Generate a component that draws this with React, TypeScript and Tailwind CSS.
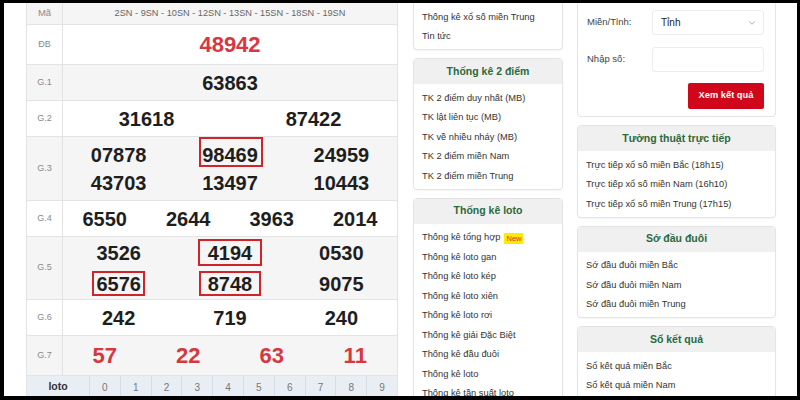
import { ChevronDown } from "lucide-react";

type Cell = string | { n: string; box: string };

function Num({ c }: { c: Cell }) {
  if (typeof c === "string") return <span>{c}</span>;
  return (
    <span className="relative">
      {c.n}
      <span className={`absolute border-2 border-[#d0242b] ${c.box}`} />
    </span>
  );
}

function Row({
  label,
  h,
  gray,
  children,
}: {
  label: string;
  h: string;
  gray?: boolean;
  children: React.ReactNode;
}) {
  return (
    <div className={`flex border-b border-[#e3e3e3] ${h} ${gray ? "bg-[#f5f5f5]" : "bg-white"}`}>
      <div className="w-[36px] shrink-0 border-r border-[#e3e3e3] flex items-center justify-center text-[9px] text-[#8a8a8a]">
        {label}
      </div>
      <div className="flex-1 flex flex-col justify-center">{children}</div>
    </div>
  );
}

function Line({ cells, cols, h, red }: { cells: Cell[]; cols: string; h: string; red?: boolean }) {
  return (
    <div
      className={`grid ${cols} ${h} items-center text-center font-bold leading-none ${
        red ? "text-[22px] text-[#d7373f]" : "text-[20px] text-[#1e1e1e]"
      }`}
    >
      {cells.map((c, i) => (
        <div key={i}>
          <Num c={c} />
        </div>
      ))}
    </div>
  );
}

function Card({
  title,
  items,
  className = "",
  top = "pt-[5px]",
}: {
  title?: string;
  items: React.ReactNode[];
  className?: string;
  top?: string;
}) {
  return (
    <div
      className={`border border-[#e4e4e4] rounded-[4px] bg-white overflow-hidden shadow-[0_1px_2px_rgba(0,0,0,0.04)] ${className}`}
    >
      {title && (
        <div className="h-[25px] bg-[#f0f0f0] flex items-center justify-center text-[10.5px] font-bold text-[#2a6a3e]">
          {title}
        </div>
      )}
      <div className={`px-[8px] pb-[2px] ${top}`}>
        {items.map((it, i) => (
          <div key={i} className="h-[19.5px] flex items-center text-[9.3px] text-[#333] whitespace-nowrap">
            {it}
          </div>
        ))}
      </div>
    </div>
  );
}

export default function App() {
  return (
    <div className="w-[800px] h-[400px] bg-black pt-[3px] pb-[4px] pl-[4px] pr-[3px] font-['Liberation_Sans',Arial,sans-serif]">
      <div className="h-full bg-white overflow-hidden flex items-start pl-[22px]">
        {/* results table */}
        <div className="w-[372px] shrink-0 border-l border-r border-[#e3e3e3]">
          <div className="flex h-[22px] border-b border-[#e3e3e3] bg-[#f5f5f5]">
            <div className="w-[36px] shrink-0 border-r border-[#e3e3e3] flex items-center justify-center text-[9.5px] text-[#8a8a8a]">
              Mã
            </div>
            <div className="flex-1 flex items-center justify-center text-[9.2px] text-[#666]">
              2SN - 9SN - 10SN - 12SN - 13SN - 15SN - 18SN - 19SN
            </div>
          </div>
          <Row label="ĐB" h="h-[40px]">
            <Line cells={["48942"]} cols="grid-cols-1" h="h-[30px]" red />
          </Row>
          <Row label="G.1" h="h-[36px]" gray>
            <Line cells={["63863"]} cols="grid-cols-1" h="h-[28px]" />
          </Row>
          <Row label="G.2" h="h-[36px]">
            <Line cells={["31618", "87422"]} cols="grid-cols-2" h="h-[28px]" />
          </Row>
          <Row label="G.3" h="h-[64px]" gray>
            <Line
              cells={["07878", { n: "98469", box: "left-[-3px] right-[-5px] top-[-7px] bottom-[-1px]" }, "24959"]}
              cols="grid-cols-3"
              h="h-[28px]"
            />
            <Line cells={["43703", "13497", "10443"]} cols="grid-cols-3" h="h-[28px]" />
          </Row>
          <Row label="G.4" h="h-[36px]">
            <Line cells={["6550", "2644", "3963", "2014"]} cols="grid-cols-4" h="h-[28px]" />
          </Row>
          <Row label="G.5" h="h-[63px]" gray>
            <Line
              cells={["3526", { n: "4194", box: "left-[-10px] right-[-10px] top-[-3px] bottom-[-2px]" }, "0530"]}
              cols="grid-cols-3"
              h="h-[31px]"
            />
            <Line
              cells={[
                { n: "6576", box: "left-[-4px] right-[-4px] top-[-2px] bottom-[-1px]" },
                { n: "8748", box: "left-[-9px] right-[-9px] top-[-2px] bottom-[-1px]" },
                "9075",
              ]}
              cols="grid-cols-3"
              h="h-[31px]"
            />
          </Row>
          <Row label="G.6" h="h-[36px]">
            <Line cells={["242", "719", "240"]} cols="grid-cols-3" h="h-[28px]" />
          </Row>
          <Row label="G.7" h="h-[40px]" gray>
            <Line cells={["57", "22", "63", "11"]} cols="grid-cols-4" h="h-[30px]" red />
          </Row>
          <div className="flex h-[22px] bg-[#e9eef4] text-[10px]">
            <div className="w-[63px] shrink-0 border-r border-[#d6dde6] flex items-center justify-center font-bold text-[10.5px] text-[#333]">
              loto
            </div>
            {["0", "1", "2", "3", "4", "5", "6", "7", "8", "9"].map((d) => (
              <div
                key={d}
                className="flex-1 border-r border-[#d6dde6] last:border-r-0 flex items-center justify-center text-[#777]"
              >
                {d}
              </div>
            ))}
          </div>
        </div>

        {/* middle column */}
        <div className="w-[150px] shrink-0 ml-[15px] mt-[-20px] flex flex-col gap-[8px]">
          <Card top="pt-[24px]" items={["Thống kê xổ số miền Trung", "Tin tức"]} />
          <Card
            title="Thống kê 2 điểm"
            items={[
              "TK 2 điểm duy nhất (MB)",
              "TK lật liên tục (MB)",
              "TK về nhiều nháy (MB)",
              "TK 2 điểm miền Nam",
              "TK 2 điểm miền Trung",
            ]}
          />
          <Card
            title="Thống kê loto"
            items={[
              <>
                Thống kê tổng hợp
                <span className="ml-[4px] h-[11px] px-[2px] bg-[#ffea00] text-[#e0302a] text-[7.5px] flex items-center">
                  New
                </span>
              </>,
              "Thống kê loto gan",
              "Thống kê loto kép",
              "Thống kê loto xiên",
              "Thống kê loto rơi",
              "Thống kê giải Đặc Biệt",
              "Thống kê đầu đuôi",
              "Thống kê loto",
              "Thống kê tần suất loto",
            ]}
          />
        </div>

        {/* right column */}
        <div className="w-[199px] shrink-0 ml-[14px] mt-[-10px] flex flex-col gap-[8px]">
          <div className="border border-[#e4e4e4] rounded-[4px] bg-white pl-[9px] pr-[11px] pt-[16px] pb-[7px] flex flex-col gap-[11.5px] text-[9.5px] text-[#444]">
            <div className="flex items-center h-[25px]">
              <span className="w-[65px] shrink-0">Miền/Tỉnh:</span>
              <div className="flex-1 h-full border border-[#ececec] rounded-[3px] flex items-center justify-between pl-[8px] pr-[6px] text-[10px] text-[#222]">
                Tỉnh
                <ChevronDown size={10} strokeWidth={2} className="text-[#999]" />
              </div>
            </div>
            <div className="flex items-center h-[25px]">
              <span className="w-[65px] shrink-0">Nhập số:</span>
              <div className="flex-1 h-full border border-[#ececec] rounded-[3px]" />
            </div>
            <div className="flex justify-end">
              <div className="w-[76px] h-[26px] rounded-[2px] bg-[#d0061b] flex items-center justify-center text-white font-bold text-[9.3px]">
                Xem kết quả
              </div>
            </div>
          </div>
          <Card
            title="Tường thuật trực tiếp"
            items={[
              "Trực tiếp xổ số miền Bắc (18h15)",
              "Trực tiếp xổ số miền Nam (16h10)",
              "Trực tiếp xổ số miền Trung (17h15)",
            ]}
          />
          <Card title="Sớ đầu đuôi" items={["Sớ đầu đuôi miền Bắc", "Sớ đầu đuôi miền Nam", "Sớ đầu đuôi miền Trung"]} />
          <Card title="Sổ kết quả" items={["Sổ kết quả miền Bắc", "Sổ kết quả miền Nam"]} />
        </div>
      </div>
    </div>
  );
}
